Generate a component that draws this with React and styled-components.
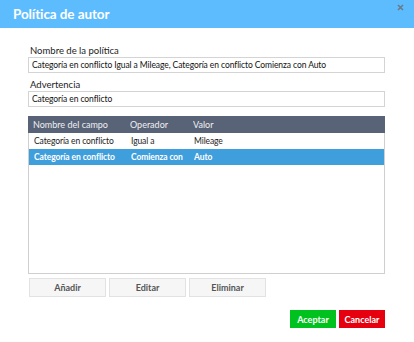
import styled, { createGlobalStyle } from 'styled-components';

const Global = createGlobalStyle`
    html, body {
        margin: 0;
        padding: 0;
        background: #fff;
    }
    body {
        font-family: Lato, 'Open Sans', sans-serif;
    }
`;

const Dialog = styled.div`
    width: 414px;
    height: 342px;
    display: flex;
    flex-direction: column;
    background: #fff;
`;

const TitleBar = styled.div`
    height: 28px;
    background: #5cbcfe;
    display: flex;
    align-items: center;
    padding: 0 0 0 13px;
    position: relative;

    h1 {
        margin: 0;
        font-size: 13.5px;
        font-weight: 700;
        color: #fff;
        letter-spacing: -0.1px;
    }
`;

const Close = styled.button`
    position: absolute;
    top: 2px;
    right: 9px;
    border: 0;
    background: none;
    padding: 0;
    width: 10px;
    height: 10px;
    display: flex;
    align-items: center;
    justify-content: center;
`;

const Body = styled.div`
    flex: 1;
    display: flex;
    flex-direction: column;
    padding: 17px 29px 0 28px;
`;

const Label = styled.label`
    font-size: 9.5px;
    color: #222;
    line-height: 12px;
    height: 12px;
    padding-left: 2px;
`;

const Input = styled.div`
    height: 14px;
    border: 1px solid #d4d4d4;
    font-size: 8.5px;
    letter-spacing: -0.08px;
    line-height: 14px;
    color: #111;
    padding: 0 3px;
    margin-bottom: ${({ $gap }) => $gap}px;
    white-space: nowrap;
    overflow: hidden;
`;

const TableBox = styled.div`
    height: 158px;
    border: 1px solid #cfcfcf;
    border-top: 0;
    display: flex;
    flex-direction: column;
    box-sizing: border-box;
`;

const Row = styled.div`
    display: grid;
    grid-template-columns: 97px 63px 1fr;
    align-items: center;
    padding-left: 5px;
    font-size: ${({ $kind }) => ($kind === 'head' ? 9 : 8.5)}px;
    letter-spacing: ${({ $kind }) => ($kind === 'head' ? 0 : -0.1)}px;
    background: ${({ $kind }) =>
        $kind === 'head' ? '#586378' : $kind === 'selected' ? '#3f9edc' : '#fff'};
    color: ${({ $kind }) => ($kind === 'head' ? '#f0f0f0' : $kind === 'selected' ? '#fff' : '#222')};
    font-weight: ${({ $kind }) => ($kind === 'selected' ? 700 : 400)};
    height: ${({ $kind }) => ($kind === 'head' ? 17 : 16)}px;
    margin: 0 ${({ $kind }) => ($kind === 'head' ? -1 : 0)}px;

    span {
        white-space: nowrap;
        overflow: hidden;
    }
`;

const ToolRow = styled.div`
    display: flex;
    gap: 3px;
    margin-top: 4px;
    padding-left: 1px;
`;

const ToolButton = styled.button`
    width: 77px;
    height: 19px;
    border: 1px solid #e2e2e2;
    background: #f6f6f6;
    font-family: inherit;
    font-size: 9px;
    font-weight: 700;
    color: #555;
    padding: 0;
`;

const Footer = styled.div`
    display: flex;
    justify-content: flex-end;
    gap: 3px;
    margin-top: 13px;
`;

const ActionButton = styled.button`
    width: 46px;
    height: 18px;
    border: 0;
    background: ${({ $color }) => $color};
    color: #fff;
    font-family: inherit;
    font-size: 9px;
    font-weight: 700;
    padding: 0;
`;

const rows = [
    ['Categoría en conflicto', 'Igual a', 'Mileage', 'normal'],
    ['Categoría en conflicto', 'Comienza con', 'Auto', 'selected'],
];

export default function App() {
    return (
        <Dialog>
            <Global />
            <TitleBar>
                <h1>Política de autor</h1>
                <Close aria-label="Cerrar">
                    <svg width="7" height="7" viewBox="0 0 7 7">
                        <path d="M1 1L6 6M6 1L1 6" stroke="#6b7a88" strokeWidth="1.6" />
                    </svg>
                </Close>
            </TitleBar>
            <Body>
                <Label>Nombre de la política</Label>
                <Input $gap={6}>
                    Categoría en conflicto Igual a Mileage, Categoría en conflicto Comienza con Auto
                </Input>
                <Label>Advertencia</Label>
                <Input $gap={9}>Categoría en conflicto</Input>
                <TableBox>
                    <Row $kind="head">
                        <span>Nombre del campo</span>
                        <span>Operador</span>
                        <span>Valor</span>
                    </Row>
                    {rows.map(([name, op, val, kind], i) => (
                        <Row $kind={kind} key={'row' + i}>
                            <span>{name}</span>
                            <span>{op}</span>
                            <span>{val}</span>
                        </Row>
                    ))}
                </TableBox>
                <ToolRow>
                    <ToolButton>Añadir</ToolButton>
                    <ToolButton>Editar</ToolButton>
                    <ToolButton>Eliminar</ToolButton>
                </ToolRow>
                <Footer>
                    <ActionButton $color="#00c21e">Aceptar</ActionButton>
                    <ActionButton $color="#e6000f">Cancelar</ActionButton>
                </Footer>
            </Body>
        </Dialog>
    );
}
